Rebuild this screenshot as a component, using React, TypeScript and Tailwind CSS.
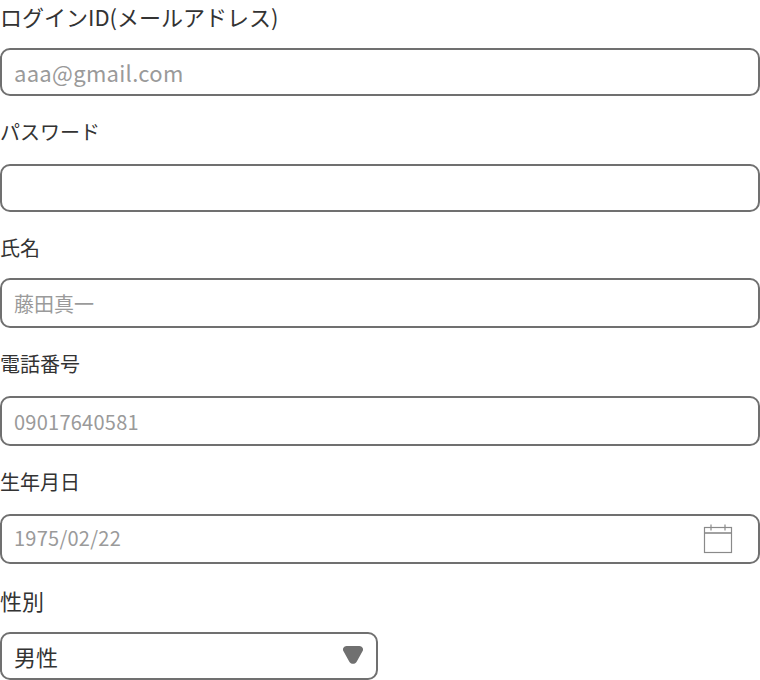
const font = "font-['Noto_Sans_CJK_JP','Noto_Sans',sans-serif]";

function Label({ children, className }: { children: React.ReactNode; className: string }) {
  return <div className={`leading-[28px] text-[#333] ${className}`}>{children}</div>;
}

function TextBox({
  placeholder,
  height,
  size = "text-[20px]",
  inputClass = "",
  children,
}: {
  placeholder?: string;
  height: string;
  size?: string;
  inputClass?: string;
  children?: React.ReactNode;
}) {
  return (
    <div className={`flex items-center w-full ${height} border-2 border-[#707070] rounded-[10px] pl-[12px] pr-[25px] bg-white`}>
      <input
        type="text"
        placeholder={placeholder}
        className={`flex-1 min-w-0 outline-none ${size} ${inputClass} placeholder:text-[#9a9a9a]`}
      />
      {children}
    </div>
  );
}

function CalendarIcon() {
  return (
    <svg width="30" height="30" viewBox="0 0 30 30" fill="none" stroke="#8a8a8a" strokeWidth="1.2">
      <rect x="1.5" y="3.5" width="27" height="25" />
      <path d="M1.5 9h27" strokeWidth="1.6" />
      <path d="M8 0.5v6M22 0.5v6" />
    </svg>
  );
}

export default function App() {
  return (
    <div className={`w-[760px] h-[680px] overflow-hidden bg-white ${font}`}>
      <Label className="text-[22px] pt-[2px] mb-[18px]">ログインID(メールアドレス)</Label>
      <TextBox placeholder="aaa@gmail.com" height="h-[48px]" size="text-[22px]" inputClass="tracking-[0.3px]" />
      <Label className="text-[20px] mt-[22px] mb-[18px]">パスワード</Label>
      <TextBox height="h-[48px]" />
      <Label className="text-[20px] mt-[22px] mb-[16px]">氏名</Label>
      <TextBox placeholder="藤田真一" height="h-[50px]" inputClass="pt-[2px]" />
      <Label className="text-[20px] mt-[22px] mb-[18px]">電話番号</Label>
      <TextBox placeholder="09017640581" height="h-[50px]" inputClass="pt-[2px] tracking-[0.25px]" />
      <Label className="text-[20px] mt-[22px] mb-[18px]">生年月日</Label>
      <TextBox placeholder="1975/02/22" height="h-[50px]" inputClass="pb-[2px] tracking-[0.25px]">
        <CalendarIcon />
      </TextBox>
      <Label className="text-[22px] mt-[22px] mb-[18px]">性別</Label>
      <div className="flex items-center justify-between w-[378px] h-[48px] border-2 border-[#707070] rounded-[10px] pl-[12px] pr-[12px] text-[22px] text-[#333]">
        <span>男性</span>
        <svg width="22" height="20" viewBox="0 0 22 20" className="mb-[2px]">
          <path d="M4.5 1h13a3.5 3.5 0 0 1 3 5.3L14.8 16.6a4.4 4.4 0 0 1-7.6 0L1.5 6.3A3.5 3.5 0 0 1 4.5 1z" fill="#707070" />
        </svg>
      </div>
    </div>
  );
}
